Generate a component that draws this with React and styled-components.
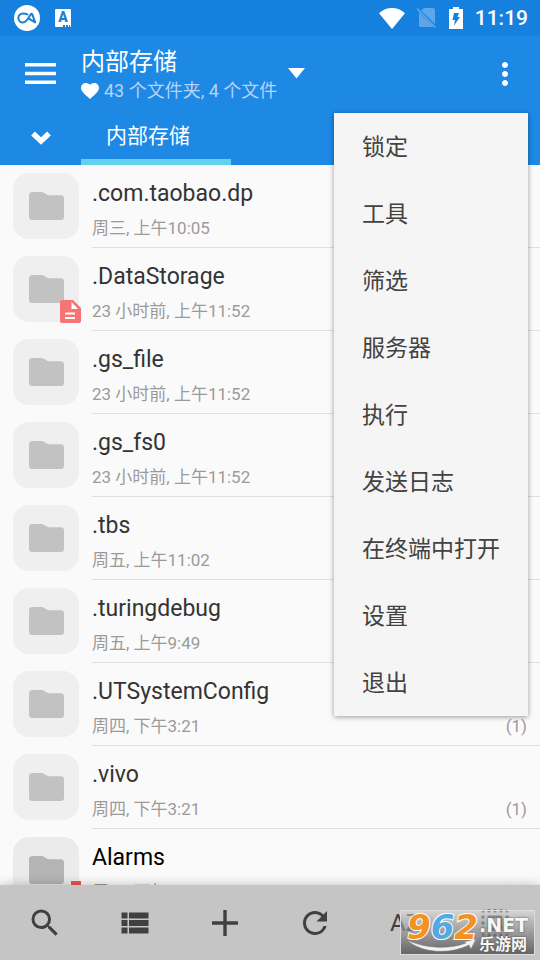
import React from "react";
import styled, { createGlobalStyle } from "styled-components";
import {
  MdMoreVert,
  MdSearch,
  MdViewList,
  MdRefresh,
  MdSelectAll,
} from "react-icons/md";

const files = [
  { name: ".com.taobao.dp", date: "周三, 上午10:05", hidden: true },
  { name: ".DataStorage", date: "23 小时前, 上午11:52", hidden: true, badge: "doc" },
  { name: ".gs_file", date: "23 小时前, 上午11:52", hidden: true },
  { name: ".gs_fs0", date: "23 小时前, 上午11:52", hidden: true },
  { name: ".tbs", date: "周五, 上午11:02", hidden: true },
  { name: ".turingdebug", date: "周五, 上午9:49", hidden: true },
  { name: ".UTSystemConfig", date: "周四, 下午3:21", hidden: true, count: 1 },
  { name: ".vivo", date: "周四, 下午3:21", hidden: true, count: 1 },
  { name: "Alarms", date: "周五, 下午3:21", badge: "music", count: 0 },
];

const menuItems = [
  "锁定",
  "工具",
  "筛选",
  "服务器",
  "执行",
  "发送日志",
  "在终端中打开",
  "设置",
  "退出",
];

export default function App() {
  return (
    <Screen>
      <GlobalStyle />
      <StatusBar />
      <Header />
      <FileList>
        {files.map((file) => (
          <FileRow key={file.name} file={file} />
        ))}
      </FileList>
      <BottomBar>
        <ToolButton aria-label="搜索">
          <MdSearch size={36} />
        </ToolButton>
        <ToolButton aria-label="视图">
          <MdViewList size={36} />
        </ToolButton>
        <ToolButton aria-label="新建">
          <svg width="26" height="26" viewBox="0 0 26 26">
            <path d="M13 0v26M0 13h26" stroke="currentColor" strokeWidth="3.4" />
          </svg>
        </ToolButton>
        <ToolButton aria-label="刷新">
          <MdRefresh size={36} />
        </ToolButton>
        <ToolButton>AZ</ToolButton>
        <ToolButton aria-label="全选">
          <MdSelectAll size={36} />
        </ToolButton>
      </BottomBar>
      <Menu>
        {menuItems.map((item) => (
          <MenuItem key={item}>{item}</MenuItem>
        ))}
      </Menu>
      <SiteMark />
    </Screen>
  );
}

function StatusBar() {
  return (
    <StatusBarStyle>
      <svg width="26" height="26" viewBox="0 0 26 26">
        <circle cx="13" cy="13" r="13" fill="#fff" />
        <path
          d="M13.500 9.500C12 8.400 11 8.400 9 8.400a4.600 4.600 0 0 0 0 9.200c3.500 0 5.500-4.500 8-8.600.5-.6 1-.4 1.200.2l3 8.200-6-3.600"
          fill="none"
          stroke="#1b7fd8"
          strokeWidth="2"
          strokeLinecap="round"
          strokeLinejoin="round"
        />
      </svg>
      <InputBadge>
        A
        <svg width="8" height="2" viewBox="0 0 8 2">
          <path d="M0 0h2v2H0zM3 0h2v2H3zM6 0h1v2H6z" fill="#1b7fd8" />
        </svg>
      </InputBadge>
      <StatusIcons>
        <svg width="26" height="21" viewBox="0 0 26 21">
          <path d="M0 5.200C7-1.700 19-1.700 26 5.200L13 21z" fill="#fff" />
        </svg>
        <svg width="20" height="22" viewBox="0 0 20 22">
          <path d="M7 1h9c1 0 2 .8 2 2v14L4 3.500zM2 5.500 17 20H4c-1 0-2-.8-2-2z" fill="#5ea6e9" />
          <path d="M0 1.500 18.500 20.500" stroke="#5ea6e9" strokeWidth="1.600" />
        </svg>
        <svg width="14" height="22" viewBox="0 0 14 22">
          <path d="M4 0h6v2h4v20H0V2h4z" fill="#fff" />
          <path d="M5 6h5L8.500 10H11l-6 8.500L6 13H3.500z" fill="#1580dd" />
        </svg>
      </StatusIcons>
      <Clock>11:19</Clock>
    </StatusBarStyle>
  );
}

function Header() {
  return (
    <HeaderStyle>
      <TitleRow>
        <IconButton aria-label="导航">
          <svg width="31" height="21" viewBox="0 0 31 21">
            <path d="M0 0h31v3.400H0zM0 8.800h31v3.400H0zM0 17.600h31V21H0z" fill="#fff" />
          </svg>
        </IconButton>
        <Location>
          <Titles>
            <Title>内部存储</Title>
            <Summary>
              <svg width="18" height="16" viewBox="2 3 20 18.350" preserveAspectRatio="none">
                <path
                  d="M12 21.350l-1.450-1.320C5.400 15.360 2 12.280 2 8.500 2 5.420 4.420 3 7.500 3c1.740 0 3.410.81 4.500 2.090C13.090 3.810 14.760 3 16.500 3 19.580 3 22 5.420 22 8.500c0 3.780-3.400 6.860-8.550 11.540L12 21.350z"
                  fill="#fff"
                />
              </svg>
              43 个文件夹, 4 个文件
            </Summary>
          </Titles>
          <svg width="17" height="11" viewBox="0 0 17 11">
            <path d="M0 0h17L8.500 10.500z" fill="#fff" />
          </svg>
        </Location>
        <MoreButton aria-label="更多">
          <MdMoreVert size={36} />
        </MoreButton>
      </TitleRow>
      <TabRow>
        <IconButton aria-label="展开">
          <svg width="20" height="14" viewBox="0 0 20 14">
            <path d="M2 2.500l8 7.500 8-7.500" fill="none" stroke="#fff" strokeWidth="5.400" />
          </svg>
        </IconButton>
        <Tab>内部存储</Tab>
      </TabRow>
    </HeaderStyle>
  );
}

function FileRow({ file }) {
  return (
    <Row>
      <Tile $hidden={file.hidden}>
        <svg width="42" height="42" viewBox="0 0 24 24" fill="currentColor">
          <path d="M10 4H4.300c-1.100 0-2 .7-2 1.800V18.300c0 1 .8 1.700 1.700 1.700h16.600c1 0 1.700-.7 1.700-1.700V7.500c0-1-.8-1.700-1.700-1.700h-7.400z" />
        </svg>
        {file.badge && <Badge type={file.badge} />}
      </Tile>
      <RowBody $hidden={file.hidden}>
        <FileName>{file.name}</FileName>
        <Meta>
          <span>{file.date}</span>
          {file.count !== undefined && <span>({file.count})</span>}
        </Meta>
      </RowBody>
    </Row>
  );
}

function Badge({ type }) {
  return (
    <BadgeStyle width="21" height="23" viewBox="0 0 21 23">
      {type === "doc" ? (
        <>
          <path d="M2 0h11l8 8v13a2 2 0 0 1-2 2H2a2 2 0 0 1-2-2V2a2 2 0 0 1 2-2z" fill="#f77474" />
          <path d="M11.500 2v7H18z" fill="#fff" />
          <path d="M5 12.500h10v2H5zM5 17h10v2H5z" fill="#fff" />
        </>
      ) : (
        <path d="M11 0h10v6h-6v12a5 5 0 1 1-4-5z" fill="#ef5350" />
      )}
    </BadgeStyle>
  );
}

function SiteMark() {
  return (
    <SiteMarkStyle>
      <Swoosh width="70" height="14" viewBox="0 0 70 14">
        <path
          d="M0 1c17 8 41 10 59 3l-3-1 13-3-5 10-2-4C42 16 14 14 0 1z"
          fill="#f2f2f2"
          stroke="#777"
          strokeWidth=".5"
        />
      </Swoosh>
      <MarkNumber>
        <MarkDigit $color="#f39122">9</MarkDigit>
        <MarkDigit $color="#55a9e2">6</MarkDigit>
        <MarkDigit $color="#f39122">2</MarkDigit>
      </MarkNumber>
      <MarkSide>
        <MarkDomain>.NET</MarkDomain>
        <MarkName>乐游网</MarkName>
      </MarkSide>
    </SiteMarkStyle>
  );
}

const GlobalStyle = createGlobalStyle`
  * {
    box-sizing: border-box;
  }
  body {
    margin: 0;
    font-family: Roboto, "Noto Sans CJK SC", sans-serif;
    background-color: #fafafa;
  }
  button {
    border: none;
    padding: 0;
    background: none;
    font: inherit;
    color: inherit;
  }
  svg {
    display: block;
    flex-shrink: 0;
  }
`;

const Screen = styled.div`
  position: relative;
  display: flex;
  flex-direction: column;
  height: 100vh;
  overflow: hidden;
`;

const StatusBarStyle = styled.div`
  display: flex;
  align-items: center;
  height: 36px;
  flex-shrink: 0;
  padding: 0 12px 0 14px;
  background-color: #1580dd;
  color: #ffffff;
`;

const InputBadge = styled.div`
  display: flex;
  flex-direction: column;
  align-items: center;
  width: 16px;
  height: 18px;
  margin-left: 15px;
  border-radius: 1px;
  background-color: #ffffff;
  color: #1b7fd8;
  font-size: 14px;
  font-weight: 900;
  line-height: 16px;

  svg {
    align-self: flex-end;
  }
`;

const StatusIcons = styled.div`
  display: flex;
  align-items: center;
  gap: 12px;
  margin-left: auto;
  margin-right: 12px;
`;

const Clock = styled.span`
  font-size: 21px;
  font-weight: 500;
  line-height: 24px;
`;

const HeaderStyle = styled.header`
  flex-shrink: 0;
  background-color: #1e88e5;
  color: #ffffff;
`;

const TitleRow = styled.div`
  display: flex;
  height: 75px;
`;

const IconButton = styled.button`
  display: flex;
  align-items: center;
  justify-content: center;
  width: 81px;
`;

const MoreButton = styled(IconButton)`
  width: 70px;
  margin-left: auto;
`;

const Location = styled.button`
  display: flex;
  align-items: center;
  gap: 11px;
  text-align: left;
`;

const Titles = styled.span`
  display: flex;
  flex-direction: column;
  padding-top: 2px;
`;

const Title = styled.span`
  font-size: 24px;
  line-height: 32px;
`;

const Summary = styled.span`
  display: flex;
  align-items: center;
  gap: 5px;
  font-size: 18px;
  line-height: 26px;
  color: #b9d2f7;
`;

const TabRow = styled.nav`
  display: flex;
  height: 54px;
`;

const Tab = styled.button`
  width: 150px;
  padding: 2px 16px 0 0;
  border-bottom: 6px solid #62d0ee;
  font-size: 21px;
  line-height: 30px;
`;

const FileList = styled.ul`
  flex: 1;
  min-height: 0;
  margin: 0;
  padding: 0;
  overflow: hidden;
  list-style: none;
  background-color: #fafafa;
`;

const Row = styled.li`
  display: flex;
  gap: 13px;
  height: 83px;
  padding-left: 13px;
`;

const Tile = styled.div`
  position: relative;
  display: flex;
  align-items: center;
  justify-content: center;
  width: 66px;
  height: 66px;
  margin-top: 8px;
  border-radius: 16px;
  background-color: ${({ $hidden }) => ($hidden ? "#efefef" : "#ebebeb")};
  color: ${({ $hidden }) => ($hidden ? "#c2c2c2" : "#b4b4b4")};
`;

const BadgeStyle = styled.svg`
  position: absolute;
  right: -2px;
  bottom: -1px;
`;

const RowBody = styled.div`
  flex: 1;
  padding: 13px 13px 0 0;
  border-bottom: 1px solid #e0e0e0;
  color: ${({ $hidden }) => ($hidden ? "#333333" : "#000000")};
`;

const FileName = styled.div`
  font-size: 23px;
  line-height: 32px;
`;

const Meta = styled.div`
  display: flex;
  justify-content: space-between;
  margin-top: 5px;
  font-size: 17px;
  line-height: 26px;
  color: #9a9a9a;
`;

const BottomBar = styled.div`
  position: relative;
  display: grid;
  grid-template-columns: repeat(6, 1fr);
  height: 75px;
  flex-shrink: 0;
  background-color: #c5c5c5;
  box-shadow: 0 0 10px rgba(0, 0, 0, 0.25);
  color: #404040;
`;

const ToolButton = styled.button`
  display: flex;
  align-items: center;
  justify-content: center;
  font-size: 24px;
`;

const Menu = styled.div`
  position: absolute;
  top: 113px;
  right: 12px;
  display: flex;
  flex-direction: column;
  background-color: #f5f5f5;
  box-shadow: 0 1px 5px rgba(0, 0, 0, 0.4);
`;

const MenuItem = styled.button`
  height: 67px;
  padding: 2px 28px 0;
  text-align: left;
  font-size: 23px;
  line-height: 32px;
  color: #424242;
`;

const SiteMarkStyle = styled.div`
  position: absolute;
  right: 5px;
  bottom: 5px;
  display: flex;
  gap: 1px;
  width: 135px;
  height: 45px;
  padding-left: 6px;
  border: 1px solid #dddddd;
  background: linear-gradient(rgba(225, 225, 225, 0.5), rgba(85, 85, 85, 0.85));
  font-family: "DejaVu Sans", "Noto Sans CJK SC", sans-serif;
  font-weight: 700;
`;

const MarkNumber = styled.span`
  position: relative;
  font-size: 34px;
  font-style: italic;
  line-height: 32px;
`;

const MarkDigit = styled.span`
  color: ${({ $color }) => $color};
  -webkit-text-stroke: 2px #ffffff;
  paint-order: stroke fill;
`;

const MarkSide = styled.span`
  display: flex;
  flex-direction: column;
  padding-top: 4px;
  color: #f7f7f7;
  text-shadow: 0 0 2px #444444;
`;

const MarkDomain = styled.span`
  font-size: 19px;
  line-height: 20px;
`;

const MarkName = styled.span`
  font-size: 16px;
  line-height: 20px;
`;

const Swoosh = styled.svg`
  position: absolute;
  left: 6px;
  bottom: 1px;
`;
